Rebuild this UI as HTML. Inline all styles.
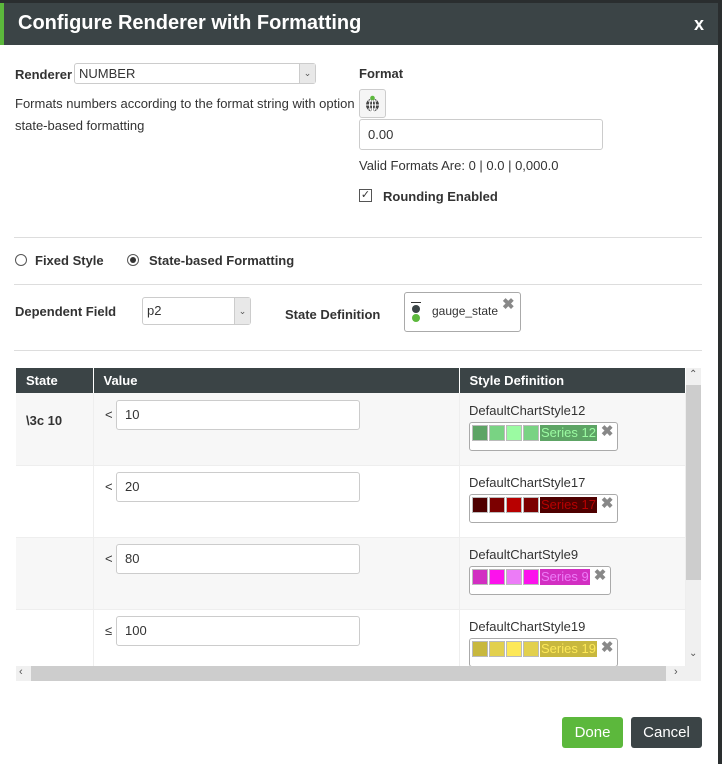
<!DOCTYPE html>
<html><head><style>
*{box-sizing:border-box;margin:0;padding:0}
body{width:722px;height:764px;background:#2a2e2f;font-family:"Liberation Sans",sans-serif;font-size:13px;color:#333;position:relative;overflow:hidden}
.dlg{position:absolute;left:0;top:3px;width:718px;height:761px;background:#fff}
.hdr{position:absolute;left:0;top:0;width:718px;height:42px;background:#3b4446;border-left:4px solid #5cb83c;color:#fff;font-weight:bold;font-size:20px;padding:9px 0 0 14px}
.hdr .x{position:absolute;right:14px;top:11px;font-size:18px}
.a{position:absolute}
.b{font-weight:bold;font-size:13px;color:#333}
.inp{position:absolute;border:1px solid #ccc;border-radius:3px;background:#fff;padding:0 8px;font-size:13px;color:#333}
.hr{position:absolute;left:14px;width:688px;height:1px;background:#ddd}
.sel-arrow{position:absolute;top:0;right:0;width:16px;height:100%;background:#e8e8e8;border-left:1px solid #ccc;font-size:9px;text-align:center;color:#555}
table{border-collapse:collapse;position:absolute;left:16px;top:365px;width:670px}
th{background:#3b4446;color:#fff;text-align:left;font-size:13px;height:25px;padding:0 10px;border-right:1px solid #fff}
td{vertical-align:top;border-right:1px solid #eee;border-bottom:1px solid #eee}
.sw{display:inline-block;width:16px;height:16px;border:1px solid #bbb;margin-right:1px;vertical-align:top}
.sbox{position:absolute;border:1px solid #aaa;border-radius:3px;height:29px;padding:2px;background:#fff;white-space:nowrap}
.ser{display:inline-block;height:16px;font-size:13px;line-height:16px;vertical-align:top;padding:0 1px}
.xx{display:inline-block;color:#888;font-weight:bold;font-size:15px;margin-left:4px;line-height:14px;vertical-align:top}
</style></head><body>
<div class="dlg">
<div class="hdr">Configure Renderer with Formatting<span class="x">x</span></div>
<div class="a b" style="left:15px;top:64px">Renderer</div>
<div class="inp" style="left:74px;top:60px;width:242px;height:21px;line-height:19px;padding-left:4px">NUMBER<div class="sel-arrow">&#8964;</div></div>
<div class="a" style="left:15px;top:90px;line-height:22px;width:350px">Formats numbers according to the format string with option state-based formatting</div>
<div class="a b" style="left:359px;top:63px">Format</div>
<div class="a" style="left:359px;top:86px;width:27px;height:29px;border:1px solid #ccc;border-radius:3px;background:#f5f5f5">
<svg width="25" height="27" viewBox="0 0 25 27"><circle cx="12.5" cy="15" r="6.5" fill="#444"/><path d="M6 15h13M12.5 8.5v13M8 11h9M8 19h9" stroke="#fff" stroke-width="1"/><ellipse cx="12.5" cy="15" rx="3" ry="6.5" fill="none" stroke="#fff" stroke-width="1"/><circle cx="12.5" cy="8" r="2.3" fill="#5cb83c"/></svg></div>
<div class="inp" style="left:359px;top:116px;width:244px;height:31px;line-height:29px">0.00</div>
<div class="a" style="left:359px;top:155px">Valid Formats Are: 0 | 0.0 | 0,000.0</div>
<div class="a" style="left:359px;top:186px;width:13px;height:13px;border:1px solid #555;font-size:11px;line-height:11px;text-align:center">&#10003;</div>
<div class="a b" style="left:383px;top:186px">Rounding Enabled</div>
<div class="hr" style="top:234px"></div>
<div class="a" style="left:15px;top:251px;width:12px;height:12px;border:1px solid #555;border-radius:50%"></div>
<div class="a b" style="left:35px;top:250px">Fixed Style</div>
<div class="a" style="left:127px;top:251px;width:12px;height:12px;border:1px solid #555;border-radius:50%"><div style="margin:2px;width:6px;height:6px;border-radius:50%;background:#333"></div></div>
<div class="a b" style="left:149px;top:250px">State-based Formatting</div>
<div class="hr" style="top:281px"></div>
<div class="a b" style="left:15px;top:301px">Dependent Field</div>
<div class="inp" style="left:142px;top:294px;width:109px;height:28px;line-height:26px;padding-left:4px">p2<div class="sel-arrow">&#8964;</div></div>
<div class="a b" style="left:285px;top:304px">State Definition</div>
<div class="a" style="left:404px;top:289px;width:117px;height:40px;border:1px solid #aaa;border-radius:3px">
<div class="a" style="left:6px;top:9px;width:10px;height:1px;background:#333"></div>
<div class="a" style="left:7px;top:12px;width:8px;height:8px;border-radius:50%;background:#3b4446"></div>
<div class="a" style="left:7px;top:21px;width:8px;height:8px;border-radius:50%;background:#5cb83c"></div>
<div class="a" style="left:27px;top:11px;font-size:12px">gauge_state</div>
<div class="a" style="left:97px;top:2px;color:#888;font-weight:bold;font-size:15px">&#10006;</div></div>
<div class="hr" style="top:347px"></div>
<table>
<tr><th style="width:77px">State</th><th style="width:366px">Value</th><th>Style Definition</th></tr>
<tr style="background:#f7f7f7;height:72px"><td style="padding:20px 10px;font-weight:bold">\3c 10</td><td></td><td></td></tr>
<tr style="height:72px"><td></td><td></td><td></td></tr>
<tr style="background:#f7f7f7;height:72px"><td></td><td></td><td></td></tr>
<tr style="height:57px"><td></td><td></td><td></td></tr>
</table>
<div class="a" style="left:105px;top:404px">&lt;</div><div class="inp" style="left:116px;top:397px;width:244px;height:30px;line-height:28px">10</div>
<div class="a" style="left:105px;top:476px">&lt;</div><div class="inp" style="left:116px;top:469px;width:244px;height:30px;line-height:28px">20</div>
<div class="a" style="left:105px;top:548px">&lt;</div><div class="inp" style="left:116px;top:541px;width:244px;height:30px;line-height:28px">80</div>
<div class="a" style="left:105px;top:620px">&le;</div><div class="inp" style="left:116px;top:613px;width:244px;height:30px;line-height:28px">100</div>
<div class="a" style="left:469px;top:400px;font-size:13px">DefaultChartStyle12</div>
<div class="sbox" style="left:469px;top:419px;width:149px"><span class="sw" style="background:#5da465"></span><span class="sw" style="background:#79d383"></span><span class="sw" style="background:#9bfba2"></span><span class="sw" style="background:#79d383"></span><span class="ser" style="background:#5da465;color:#9bfba2">Series 12</span><span class="xx">&#10006;</span></div>
<div class="a" style="left:469px;top:472px;font-size:13px">DefaultChartStyle17</div>
<div class="sbox" style="left:469px;top:491px;width:149px"><span class="sw" style="background:#4e0000"></span><span class="sw" style="background:#7c0000"></span><span class="sw" style="background:#b80000"></span><span class="sw" style="background:#7c0000"></span><span class="ser" style="background:#4e0000;color:#b80000">Series 17</span><span class="xx">&#10006;</span></div>
<div class="a" style="left:469px;top:544px;font-size:13px">DefaultChartStyle9</div>
<div class="sbox" style="left:469px;top:563px;width:142px"><span class="sw" style="background:#d22fc2"></span><span class="sw" style="background:#fc12ec"></span><span class="sw" style="background:#ec7cf7"></span><span class="sw" style="background:#fc12ec"></span><span class="ser" style="background:#d22fc2;color:#ec7cf7">Series 9</span><span class="xx">&#10006;</span></div>
<div class="a" style="left:469px;top:616px;font-size:13px">DefaultChartStyle19</div>
<div style="position:absolute;left:469px;top:635px;width:149px;height:28px;overflow:hidden"><div class="sbox" style="left:0;top:0;width:149px"><span class="sw" style="background:#c8b83e"></span><span class="sw" style="background:#e2d04e"></span><span class="sw" style="background:#fde858"></span><span class="sw" style="background:#e2d04e"></span><span class="ser" style="background:#c8b83e;color:#fde858">Series 19</span><span class="xx">&#10006;</span></div></div>
<div class="a" style="left:686px;top:365px;width:15px;height:301px;background:#f0f0f0"></div>
<div class="a" style="left:686px;top:382px;width:15px;height:195px;background:#cdcdcd"></div>
<div class="a" style="left:689px;top:366px;font-size:10px;color:#555">&#8963;</div>
<div class="a" style="left:689px;top:645px;font-size:10px;color:#555">&#8964;</div>
<div class="a" style="left:16px;top:663px;width:670px;height:15px;background:#f0f0f0"></div>
<div class="a" style="left:31px;top:663px;width:635px;height:15px;background:#cdcdcd"></div>
<div class="a" style="left:19px;top:663px;font-size:11px;color:#555">&lsaquo;</div>
<div class="a" style="left:674px;top:663px;font-size:11px;color:#555">&rsaquo;</div>
<div class="a" style="left:686px;top:663px;width:15px;height:15px;background:#f0f0f0"></div>
<div class="a" style="left:562px;top:714px;width:61px;height:31px;background:#5cb83c;color:#fff;border-radius:3px;font-size:15px;text-align:center;line-height:31px">Done</div>
<div class="a" style="left:631px;top:714px;width:71px;height:31px;background:#3b4446;color:#fff;border-radius:3px;font-size:15px;text-align:center;line-height:31px">Cancel</div>
</div>
</body></html>
